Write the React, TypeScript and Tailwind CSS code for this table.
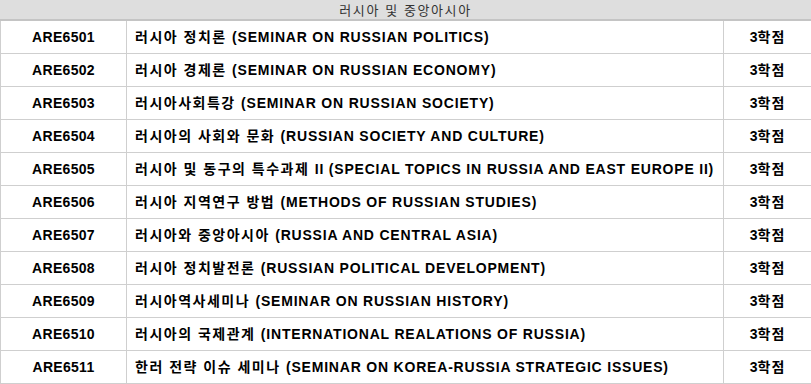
const courses = [
  { code: 'ARE6501', title: '러시아 정치론 (SEMINAR ON RUSSIAN POLITICS)' },
  { code: 'ARE6502', title: '러시아 경제론 (SEMINAR ON RUSSIAN ECONOMY)' },
  { code: 'ARE6503', title: '러시아사회특강 (SEMINAR ON RUSSIAN SOCIETY)' },
  { code: 'ARE6504', title: '러시아의 사회와 문화 (RUSSIAN SOCIETY AND CULTURE)' },
  { code: 'ARE6505', title: '러시아 및 동구의 특수과제 II (SPECIAL TOPICS IN RUSSIA AND EAST EUROPE II)' },
  { code: 'ARE6506', title: '러시아 지역연구 방법 (METHODS OF RUSSIAN STUDIES)' },
  { code: 'ARE6507', title: '러시아와 중앙아시아 (RUSSIA AND CENTRAL ASIA)' },
  { code: 'ARE6508', title: '러시아 정치발전론 (RUSSIAN POLITICAL DEVELOPMENT)' },
  { code: 'ARE6509', title: '러시아역사세미나 (SEMINAR ON RUSSIAN HISTORY)' },
  { code: 'ARE6510', title: '러시아의 국제관계 (INTERNATIONAL REALATIONS OF RUSSIA)' },
  { code: 'ARE6511', title: '한러 전략 이슈 세미나 (SEMINAR ON KOREA-RUSSIA STRATEGIC ISSUES)' },
]

// split the Korean name from the latin rest so each gets its own spacing
function Title({ text }: { text: string }) {
  const m = text.match(/^([가-힣 ]+)(.*)$/)
  const ko = m ? m[1] : ''
  const en = m ? m[2] : text
  return (
    <span>
      <span className="tracking-[1.5px]">{ko}</span>
      <span className="tracking-[0.8px]">{en}</span>
    </span>
  )
}

export default function App() {
  return (
    <div className="w-[811px] h-[384px] overflow-hidden bg-white font-['Liberation_Sans','Noto_Sans_CJK_KR',sans-serif] text-[14px] text-black">
      <div className="h-[21px] bg-[#dedede] border-b-2 border-[#c4c4c4] flex items-center justify-center text-[#333] text-[13px] tracking-[1.6px] leading-none pt-px">
        러시아 및 중앙아시아
      </div>
      {courses.map((c) => (
        <div key={c.code} className="flex h-[33px] border-b border-l border-[#cfcfcf] font-bold">
          <div className="w-[126px] shrink-0 flex items-center justify-center border-r border-[#cfcfcf] tracking-[0.3px]">
            {c.code}
          </div>
          <div className="w-[597px] shrink-0 flex items-center pl-[8px] whitespace-nowrap border-r border-[#cfcfcf]">
            <Title text={c.title} />
          </div>
          <div className="flex-1 flex items-center justify-center">
            <span>
              3<span className="tracking-[1px]">학점</span>
            </span>
          </div>
        </div>
      ))}
    </div>
  )
}
